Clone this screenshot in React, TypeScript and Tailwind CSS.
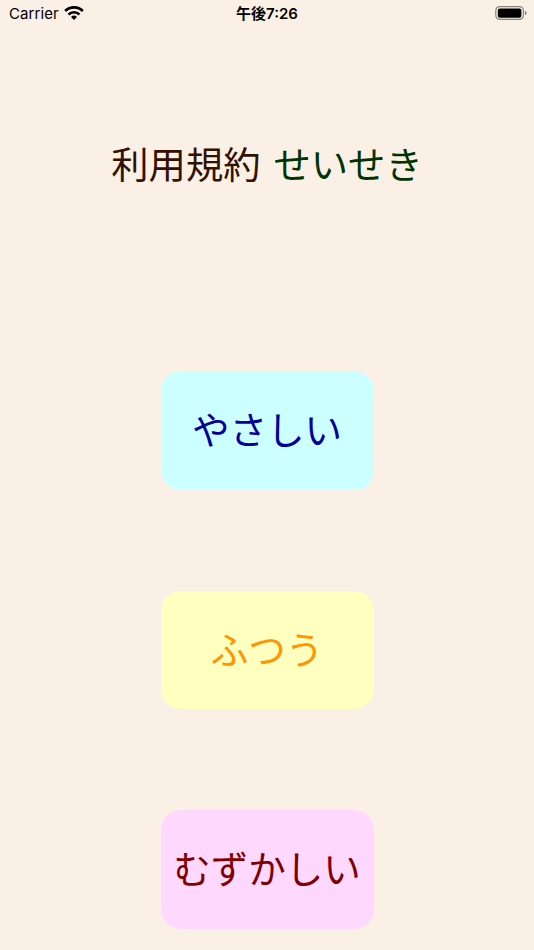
const jp = "font-['Noto_Sans_CJK_JP',sans-serif] font-normal";

function StatusBar() {
  return (
    <header className="grid h-[28px] grid-cols-[1fr_auto_1fr] items-center text-black font-['Inter','Noto_Sans_CJK_JP',sans-serif]">
      <div className="flex items-center gap-[6px] pl-[9px]">
        <span className="w-[49px] text-[15px] leading-[28px] tracking-[0.1px]">Carrier</span>
        <svg className="-mt-[2px]" width="20" height="14" viewBox="0 0 20 14">
          <path d="M10 14 7 11a4.3 4.3 0 0 1 6 0z" />
          <path d="M4.5 8.5a7.8 7.8 0 0 1 11 0" fill="none" stroke="black" strokeWidth="2.6" />
          <path d="M1.2 5.1a12.4 12.4 0 0 1 17.6 0" fill="none" stroke="black" strokeWidth="2.8" />
        </svg>
      </div>
      <span className="text-[15px] font-semibold leading-[28px]">午後7:26</span>
      <svg className="-mt-[2px] mr-[6px] justify-self-end" width="33" height="14" viewBox="0 0 33 14">
        <rect x=".8" y=".6" width="27.6" height="12.8" rx="4" fill="none" stroke="#000" strokeOpacity=".45" strokeWidth="1.2" />
        <rect x="2.8" y="2.4" width="23.6" height="9.3" rx="2" />
        <path d="M29.8 4.7v4.6q2-.8 2-2.3t-2-2.3" fillOpacity=".45" />
      </svg>
    </header>
  );
}

function Level({ label, style }: { label: string; style: string }) {
  return (
    <button className={`flex h-[118.5px] w-[213px] items-center justify-center rounded-[20px] pb-[5px] whitespace-nowrap text-[37.5px] leading-none ${style}`}>
      {label}
    </button>
  );
}

export default function App() {
  return (
    <div className={`h-[950px] overflow-hidden bg-[#faf0e6] ${jp}`}>
      <StatusBar />
      <nav className="mt-[114px] flex h-[44px] items-center justify-center gap-[13px] text-[37.3px] leading-none">
        <a className="text-[#331100]">利用規約</a>
        <a className="text-[#003300]">せいせき</a>
      </nav>
      <main className="mt-[185.2px] flex flex-col items-center gap-[101px]">
        <Level label="やさしい" style="bg-[#ccffff] text-[#000099]" />
        <Level label="ふつう" style="bg-[#ffffc0] text-[#ff9500]" />
        <Level label="むずかしい" style="bg-[#ffd8ff] text-[#800000]" />
      </main>
    </div>
  );
}
